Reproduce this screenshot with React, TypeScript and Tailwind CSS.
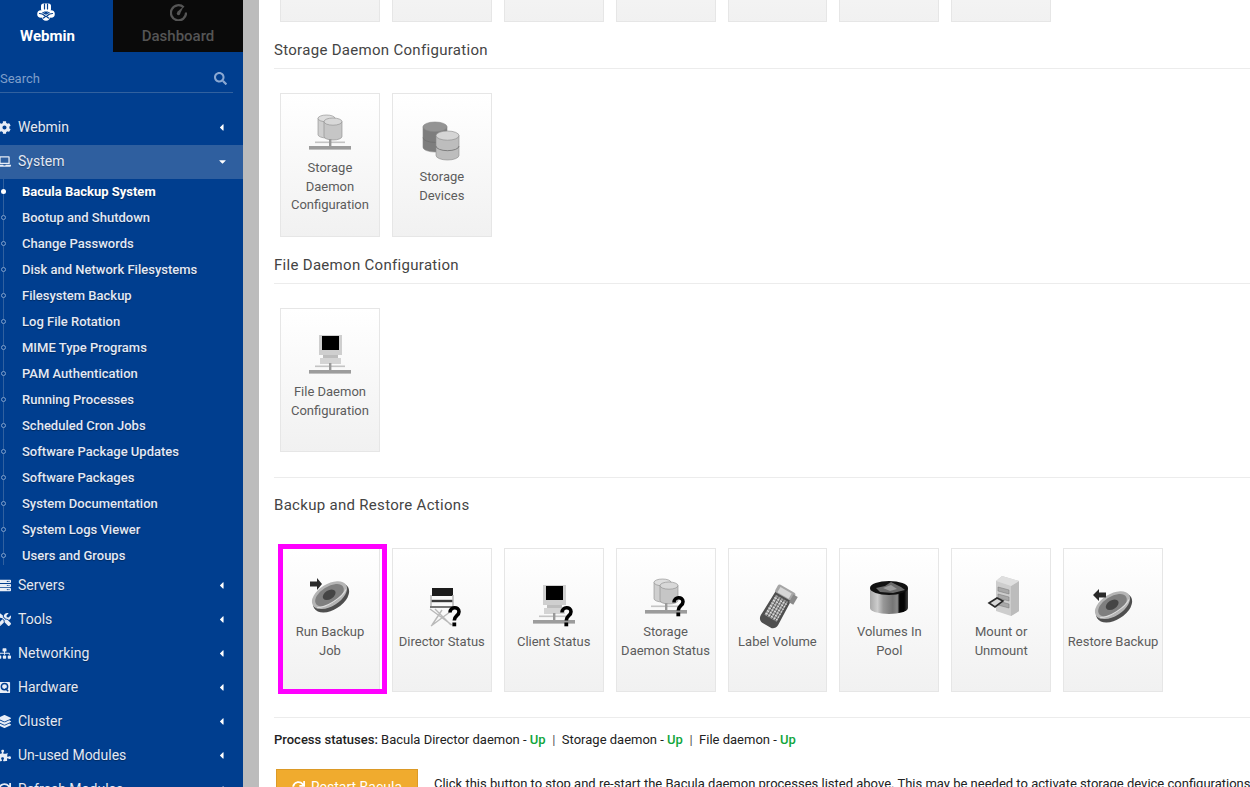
import type { ReactNode } from "react";
import {
  FaCaretDown,
  FaCaretLeft,
  FaCog,
  FaLaptop,
  FaLayerGroup,
  FaPuzzlePiece,
  FaSearch,
  FaServer,
  FaSitemap,
  FaSync,
  FaTools,
} from "react-icons/fa";

const subItems = [
  "Bacula Backup System",
  "Bootup and Shutdown",
  "Change Passwords",
  "Disk and Network Filesystems",
  "Filesystem Backup",
  "Log File Rotation",
  "MIME Type Programs",
  "PAM Authentication",
  "Running Processes",
  "Scheduled Cron Jobs",
  "Software Package Updates",
  "Software Packages",
  "System Documentation",
  "System Logs Viewer",
  "Users and Groups",
];

function HddIcon() {
  return (
    <svg viewBox="0 0 14 14" className="w-[13px] h-[13px]">
      <rect x="1" y="1" width="12" height="12" rx="1" fill="#e8edf6" />
      <circle cx="7" cy="6" r="3.4" fill="none" stroke="#003e8f" strokeWidth="1.6" />
      <path d="M8 8l3 3" stroke="#003e8f" strokeWidth="1.6" />
    </svg>
  );
}

function WebminLogo() {
  return (
    <svg viewBox="0 0 18 18" className="w-[18px] h-[18px] mr-[4px]">
      <g fill="#fff">
        <rect x="4" y="0.5" width="10" height="8" rx="2.5" />
        <circle cx="4" cy="11" r="3.8" />
        <circle cx="14" cy="11" r="3.8" />
        <circle cx="9" cy="14" r="3.8" />
      </g>
      <g fill="none" stroke="#003e8f" strokeWidth="1.2" strokeLinecap="round">
        <path d="M7.5 1v5M10.5 1v5" />
        <path d="M2.5 10.5c2 0 3.5.5 5 2M15.5 10.5c-2 0-3.5.5-5 2" />
        <path d="M6 9.5l3 1.6 3-1.6M6.5 15l2.5-2 2.5 2" />
      </g>
    </svg>
  );
}

function GaugeLogo() {
  return (
    <svg viewBox="0 0 18 18" className="w-[17px] h-[17px]">
      <path d="M14.5 3.5A8 8 0 1 0 17 9" fill="none" stroke="#555" strokeWidth="2.4" />
      <path d="M7.5 8.5l7-6-4 8z" fill="#555" />
      <circle cx="9" cy="10" r="1.8" fill="#555" />
    </svg>
  );
}

function Cyl(p: { x: number; y: number; w: number; h: number; body: string; top: string; band?: boolean }) {
  const ry = p.w * 0.2;
  const bottom = p.y + p.h - ry;
  const rx = p.w / 2;
  const cx = p.x + rx;
  return (
    <g>
      <path
        d={`M${p.x} ${p.y + ry}V${bottom}A${rx} ${ry} 0 0 0 ${p.x + p.w} ${bottom}V${p.y + ry}Z`}
        fill={p.body}
        stroke="#8a8a8a"
        strokeWidth="0.6"
      />
      <ellipse cx={cx} cy={p.y + ry} rx={rx} ry={ry} fill={p.top} stroke="#8a8a8a" strokeWidth="0.6" />
      {p.band && (
        <path
          d={`M${p.x} ${p.y + p.h * 0.52}A${rx} ${ry} 0 0 0 ${p.x + p.w} ${p.y + p.h * 0.52}`}
          fill="none"
          stroke="#6f6f6f"
          strokeWidth="0.8"
        />
      )}
    </g>
  );
}

function NetBar() {
  return (
    <g>
      <rect x="9" y="30.5" width="30" height="1.6" fill="#c4c4c4" />
      <rect x="23" y="28" width="2.4" height="7" fill="#999" />
      <rect x="3" y="35" width="42" height="3.6" fill="#9c9c9c" />
    </g>
  );
}

function Question() {
  return (
    <g fill="none" stroke="#000" strokeWidth="3.6">
      <path d="M32 27.5c0-6 9-6.500 9-.8 0 4.300-4.700 3.800-4.700 8.800" />
      <rect x="34.400" y="37.500" width="3.800" height="3.800" fill="#000" stroke="none" />
    </g>
  );
}

function StorageIcon({ q }: { q?: boolean }) {
  return (
    <Svg>
      <Cyl x={12} y={4} w={17} h={23} body="#cfcfcf" top="#dedede" />
      <Cyl x={18} y={7} w={18} h={22} body="#c6c6c6" top="#d8d8d8" />
      <NetBar />
      {q && <Question />}
    </Svg>
  );
}

function DevicesIcon() {
  return (
    <Svg>
      <Cyl x={5} y={2} w={24} h={30} body="#7d7d7d" top="#949494" band />
      <Cyl x={18} y={11} w={23} h={29} body="#bdbdbd" top="#d5d5d5" band />
    </Svg>
  );
}

function ComputerIcon({ q }: { q?: boolean }) {
  return (
    <Svg>
      <rect x="13" y="0" width="23" height="20" fill="#cfcfcf" />
      <rect x="16" y="1" width="17" height="14" fill="#000" />
      <rect x="17" y="20" width="15" height="3" fill="#bdbdbd" />
      <rect x="14" y="23" width="21" height="6" fill="#d4d4d4" />
      <NetBar />
      {q && <Question />}
    </Svg>
  );
}

function DiscIcon({ left }: { left?: boolean }) {
  return (
    <Svg>
      <g transform="rotate(-32 24 21)">
        <ellipse cx="24" cy="23" rx="20" ry="12" fill="#4f4f4f" />
        <ellipse cx="24" cy="20" rx="19.500" ry="11" fill="#b5b5b5" />
        <ellipse cx="24" cy="20" rx="16" ry="8.500" fill="#7f7f7f" />
        <ellipse cx="24" cy="19.500" rx="7" ry="4.500" fill="#454545" />
        <path d="M7 24c8 5 26 5 34 0" fill="none" stroke="#dcdcdc" strokeWidth="1.200" />
      </g>
      {left ? (
        <path d="M17 7.500h-7V4l-6 6 6 6v-3.500h7z" fill="#2a2a2a" />
      ) : (
        <path d="M4 6.500h7V3l5 6-5 6v-3.500H4z" fill="#2a2a2a" />
      )}
    </Svg>
  );
}

function DirectorIcon() {
  return (
    <Svg>
      <rect x="14" y="3" width="21" height="8" fill="#1c1c1c" />
      <path d="M13 16h22" stroke="#3a3a3a" strokeWidth="2.400" />
      <path d="M13 10v11M35 10v11" stroke="#b5b5b5" strokeWidth="1.500" />
      <path d="M12 22h25" stroke="#777" strokeWidth="2" />
      <path d="M12 24l22 16M36 24L13 41M17 24l16 16M24 25l-10 15" stroke="#b9b9b9" strokeWidth="1.400" />
      <Question />
    </Svg>
  );
}

function LabelerIcon() {
  return (
    <Svg>
      <g transform="rotate(30 24 22)">
        <path d="M15 7h18l1 30c0 4-3 6-5 6h-10c-2 0-5-2-5-6z" fill="#4f4f4f" />
        <rect x="14" y="1" width="20" height="9" rx="2" fill="#a6a6a6" />
        <rect x="17" y="3" width="13" height="6" fill="#d6d6d6" />
        <rect x="17" y="12" width="14" height="23" fill="#9a9a9a" />
        <path d="M17 15h14M17 18h14M17 21h14M17 24h14M17 27h14M17 30h14M17 33h14" stroke="#e0e0e0" strokeWidth="1.100" />
        <path d="M20 12v23M23 12v23M26 12v23M29 12v23" stroke="#3c3c3c" strokeWidth="0.700" />
        <rect x="32" y="3" width="5" height="9" fill="#8a8a8a" />
      </g>
    </Svg>
  );
}

function VolumesIcon() {
  return (
    <Svg>
      <defs>
        <linearGradient id="tape" x1="0" x2="1" y1="0" y2="0">
          <stop offset="0" stopColor="#a8a8a8" />
          <stop offset="0.2" stopColor="#cdcdcd" />
          <stop offset="0.35" stopColor="#989898" />
          <stop offset="0.6" stopColor="#757575" />
          <stop offset="0.72" stopColor="#8a8a8a" />
          <stop offset="0.78" stopColor="#050505" />
          <stop offset="0.9" stopColor="#050505" />
          <stop offset="1" stopColor="#444" />
        </linearGradient>
      </defs>
      <path d="M5 13v20a19 6 0 0 0 38 0V13z" fill="url(#tape)" />
      <ellipse cx="24" cy="13" rx="19" ry="7" fill="#111" />
      <path d="M11 13l9-2 6-4 10 5 4 3-12 3-13-1z" fill="#6b6b6b" />
      <path d="M18 13l8-3 6 4-7 2z" fill="#999" />
    </Svg>
  );
}

function MountIcon() {
  return (
    <Svg>
      <path d="M19 6l6-5 17 5v30l-8 5-15-5z" fill="#cdcdcd" />
      <path d="M34 11l8-5v30l-8 5z" fill="#bcbcbc" />
      <path d="M19 6l6-5 17 5-8 5z" fill="#dfdfdf" />
      <path d="M21 12l11 3v4l-11-3zM21 19l11 3v4l-11-3zM21 26l11 3v4l-11-3z" fill="#a8a8a8" stroke="#777" strokeWidth="0.5" />
      <path d="M12 28l8-5 6 3-8 6z" fill="#d8d8d8" stroke="#2a2a2a" strokeWidth="1.600" />
    </Svg>
  );
}

function Svg({ children }: { children: ReactNode }) {
  return (
    <svg viewBox="0 0 48 48" className="w-12 h-12 shrink-0 overflow-visible">
      {children}
    </svg>
  );
}

function NavRow({ icon, label, open }: { icon: ReactNode; label: string; open?: boolean }) {
  return (
    <div
      className={`h-[34px] flex items-center shrink-0 text-[14px] text-[#e3e9f5] [text-shadow:0_1px_1px_rgba(0,0,0,0.35)] ${
        open ? "bg-[#2f5f9f] pb-[1px]" : ""
      }`}
    >
      <span className="w-[13px] ml-[-2px] mr-[7px] flex justify-center text-[13px] text-[#e8edf6]">{icon}</span>
      <span className="flex-1">{label}</span>
      {open ? (
        <FaCaretDown className="text-[11px] text-white mr-[15px]" />
      ) : (
        <FaCaretLeft className="text-[11px] text-white mr-[16px]" />
      )}
    </div>
  );
}

function Sidebar() {
  return (
    <aside className="w-[243px] shrink-0 h-full bg-[#003e8f] overflow-hidden flex flex-col">
      <div className="flex h-[52px] shrink-0 text-[15px]">
        <div className="w-[113px] flex flex-col items-center pt-[3px] pr-[18px] font-bold text-white">
          <WebminLogo />
          <span className="leading-[20px] mt-[5px]">Webmin</span>
        </div>
        <div className="w-[130px] bg-[#0a0a0a] flex flex-col items-center pt-[4px] font-medium text-[#555]">
          <GaugeLogo />
          <span className="leading-[20px] mt-[5px]">Dashboard</span>
        </div>
      </div>
      <div className="h-[41px] mr-[10px] shrink-0 flex items-end">
        <div className="w-full h-[28px] flex items-center justify-between border-b border-[#31619f] text-[13px] text-[#7f9fca] pr-[6px]">
          <span>Search</span>
          <FaSearch className="text-[13px] text-[#8aa8d2]" />
        </div>
      </div>
      <nav className="mt-[17px] flex flex-col">
        <NavRow icon={<FaCog />} label="Webmin" />
        <div className="h-px shrink-0" />
        <NavRow icon={<FaLaptop />} label="System" open />
        <ul className="relative flex flex-col shrink-0 mb-[-1px]">
          <span className="absolute left-[3px] top-0 bottom-[4px] w-px bg-[#31619f]" />
          {subItems.map((s, i) => (
            <li
              key={s}
              className={`relative h-[26px] pl-[22px] flex items-center text-[13px] [text-shadow:0_1px_1px_rgba(0,0,0,0.35)] ${
                i === 0 ? "font-bold text-white" : "font-medium text-[#e3e9f5]"
              }`}
            >
              <span
                className={`absolute left-[1px] top-[10px] w-[5px] h-[5px] rounded-full ${
                  i === 0 ? "bg-white" : "border border-[#7f9fca] bg-[#003e8f]"
                }`}
              />
              {s}
            </li>
          ))}
        </ul>
        <NavRow icon={<FaServer />} label="Servers" />
        <NavRow icon={<FaTools />} label="Tools" />
        <NavRow icon={<FaSitemap />} label="Networking" />
        <NavRow icon={<HddIcon />} label="Hardware" />
        <NavRow icon={<FaLayerGroup />} label="Cluster" />
        <NavRow icon={<FaPuzzlePiece />} label="Un-used Modules" />
        <NavRow icon={<FaSync />} label="Refresh Modules" />
      </nav>
    </aside>
  );
}

function Tile({
  label,
  lines = 2,
  icon,
  marked,
}: {
  label?: ReactNode;
  lines?: number;
  icon?: ReactNode;
  marked?: boolean;
}) {
  const pad = lines === 3 ? "pt-[17px]" : lines === 2 ? "pt-[26px]" : "pt-[36px]";
  return (
    <div
      className={`relative w-[99.88px] h-[144px] shrink-0 border border-[#e6e6e6] bg-gradient-to-b from-white to-[#f1f1f1] flex flex-col items-center text-center text-[13px] leading-[18.57px] text-[#5c5c5c] ${pad}`}
    >
      {icon}
      <div>{label}</div>
      {marked && (
        <div className="absolute left-[-3px] top-[-5px] w-[109px] h-[150px] border-[5px] border-[#ff00ff]" />
      )}
    </div>
  );
}

function Heading({ children }: { children: ReactNode }) {
  return <h2 className="text-[15px] leading-[20px] text-[#444] tracking-[0.3px]">{children}</h2>;
}

function Main() {
  return (
    <main className="flex-1 min-w-0 h-full overflow-hidden bg-white pl-[15px]">
      <div className="flex gap-[12px] ml-[6px] mt-[-122px]">
        {Array.from({ length: 7 }).map((_, i) => (
          <Tile key={i} />
        ))}
      </div>

      <div className="mt-[18px]">
        <Heading>Storage Daemon Configuration</Heading>
        <hr className="mt-[8px] border-[#ececec]" />
      </div>
      <div className="flex gap-[12px] ml-[6px] mt-[24px]">
        <Tile
          lines={3}
          icon={<StorageIcon />}
          label={
            <>
              Storage
              <br />
              Daemon
              <br />
              Configuration
            </>
          }
        />
        <Tile
          icon={<DevicesIcon />}
          label={
            <>
              Storage
              <br />
              Devices
            </>
          }
        />
      </div>

      <div className="mt-[18px]">
        <Heading>File Daemon Configuration</Heading>
        <hr className="mt-[8px] border-[#ececec]" />
      </div>
      <div className="flex gap-[12px] ml-[6px] mt-[24px]">
        <Tile
          icon={<ComputerIcon />}
          label={
            <>
              File Daemon
              <br />
              Configuration
            </>
          }
        />
      </div>

      <hr className="mt-[25px] border-[#ececec]" />
      <div className="mt-[17px]">
        <Heading>Backup and Restore Actions</Heading>
      </div>
      <div className="flex gap-[12px] ml-[6px] mt-[33px]">
        <Tile
          marked
          icon={<DiscIcon />}
          label={
            <>
              Run Backup
              <br />
              Job
            </>
          }
        />
        <Tile lines={1} icon={<DirectorIcon />} label="Director Status" />
        <Tile lines={1} icon={<ComputerIcon q />} label="Client Status" />
        <Tile
          icon={<StorageIcon q />}
          label={
            <>
              Storage
              <br />
              Daemon Status
            </>
          }
        />
        <Tile lines={1} icon={<LabelerIcon />} label="Label Volume" />
        <Tile
          icon={<VolumesIcon />}
          label={
            <>
              Volumes In
              <br />
              Pool
            </>
          }
        />
        <Tile
          icon={<MountIcon />}
          label={
            <>
              Mount or
              <br />
              Unmount
            </>
          }
        />
        <Tile lines={1} icon={<DiscIcon left />} label="Restore Backup" />
      </div>

      <hr className="mt-[25px] border-[#ececec]" />
      <p className="mt-[13px] text-[13px] leading-[18px] text-[#222] whitespace-nowrap">
        <span className="font-medium">Process statuses:</span> Bacula Director daemon -{" "}
        <span className="font-medium text-[#10a53c]">Up</span>
        <span className="text-[#555] mx-[6.500px]">|</span>Storage daemon -{" "}
        <span className="font-medium text-[#10a53c]">Up</span>
        <span className="text-[#555] mx-[6.500px]">|</span>File daemon -{" "}
        <span className="font-medium text-[#10a53c]">Up</span>
      </p>

      <div className="mt-[20px] flex items-start whitespace-nowrap">
        <button className="ml-[2px] w-[142px] h-[38px] shrink-0 bg-[#f0ab2e] border border-[#dc9a27] text-white text-[14px] flex items-start justify-center gap-[6px] pt-[7px] leading-[20px]">
          <FaSync className="text-[13px] mt-[4px]" />
          Restart Bacula
        </button>
        <span className="ml-[16px] pt-[6px] text-[13px] leading-[18px] text-[#222]">
          Click this button to stop and re-start the Bacula daemon processes listed above. This may be needed to
          activate storage device configurations
        </span>
      </div>
    </main>
  );
}

export default function App() {
  return (
    <div className="flex w-[1250px] h-[787px] overflow-hidden bg-[#bcbcbc] font-['Roboto',sans-serif]">
      <Sidebar />
      <div className="w-[16px] shrink-0 bg-[#bcbcbc]" />
      <Main />
    </div>
  );
}
